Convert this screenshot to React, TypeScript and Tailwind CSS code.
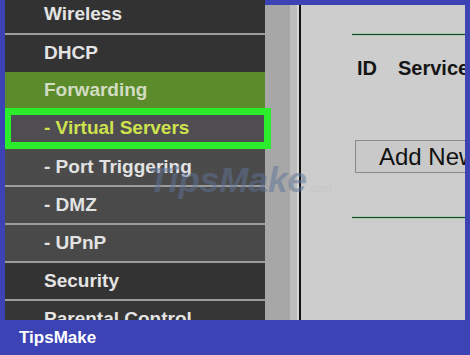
const font = { fontFamily: '"Liberation Sans", Arial, sans-serif' };

type Row = { label: string; bg: string; h: string; sep: boolean; text: string };

const ROWS: Row[] = [
  { label: "Wireless", bg: "bg-[#333232]", h: "h-[37px] -mt-[9px]", sep: true, text: "text-[#e4e4e4]" },
  { label: "DHCP", bg: "bg-[#333333]", h: "h-[37px]", sep: false, text: "text-[#e4e4e4]" },
  { label: "Forwarding", bg: "bg-[#5b8b2b]", h: "h-[36px]", sep: false, text: "text-[#d2dcc2]" },
];

const SUB_ROWS: Row[] = [
  { label: "- Port Triggering", bg: "bg-[#4b4b4b]", h: "h-[36px]", sep: true, text: "text-[#e2e2e2]" },
  { label: "- DMZ", bg: "bg-[#4a4a4a]", h: "h-[36px]", sep: true, text: "text-[#e2e2e2]" },
  { label: "- UPnP", bg: "bg-[#494949]", h: "h-[36px]", sep: true, text: "text-[#e2e2e2]" },
  { label: "Security", bg: "bg-[#333333]", h: "h-[36px]", sep: true, text: "text-[#e4e4e4]" },
  { label: "Parental Control", bg: "bg-[#363636]", h: "h-[36px]", sep: false, text: "text-[#e4e4e4]" },
];

function MenuRow({ row }: { row: Row }) {
  return (
    <>
      <div
        className={`${row.bg} ${row.h} ${row.text} flex shrink-0 items-center pl-[39px] text-[19px] font-bold`}
      >
        {row.label}
      </div>
      {row.sep && <div className="h-[2px] shrink-0 bg-[#9c9c9c]" />}
    </>
  );
}

export default function App() {
  return (
    <div className="relative flex h-[355px] w-[470px] flex-col bg-[#3b43b5]" style={font}>
      <div className="flex h-[320px] overflow-hidden pl-[5px] pr-[5px] pt-[5px]">
        {/* sidebar */}
        <div className="flex w-[260px] shrink-0 flex-col">
          {ROWS.map((r) => (
            <MenuRow key={r.label} row={r} />
          ))}
          {/* highlighted item, green frame drawn by padding */}
          <div className="relative z-10 flex h-[41px] w-[266px] shrink-0 bg-[#2ced2c] py-[7px] pl-[6px] pr-[7px]">
            <div className="flex flex-1 items-center bg-[#4f4d52] pl-[33px] text-[19px] font-bold text-[#cde24c]">
              - Virtual Servers
            </div>
          </div>
          {SUB_ROWS.map((r) => (
            <MenuRow key={r.label} row={r} />
          ))}
        </div>

        {/* scrollbar */}
        <div className="w-[25px] shrink-0 bg-[#a7a7a7]" />
        <div className="w-[7px] shrink-0 bg-[#bdbdbd]" />
        <div className="w-[2px] shrink-0 bg-[#d6d6d6]" />
        <div className="w-[2px] shrink-0 bg-[#111111]" />

        {/* content */}
        <div className="flex min-w-0 flex-1 flex-col overflow-hidden bg-[#cdcdcd] pl-[51px] pt-[28px]">
          <div className="h-[3px] w-[200px] shrink-0 border-y border-[#a9c9b0] bg-[#1d4630]" />
          <div className="mt-[19px] flex h-[26px] items-center gap-[21px] whitespace-nowrap pl-[5px] text-[20px] font-bold text-[#151515]">
            <span>ID</span>
            <span>Service</span>
          </div>
          <div className="ml-[3px] mt-[59px] flex h-[33px] w-[200px] shrink-0 items-center border border-[#8a8a8a] bg-[#c9c9c9] pl-[23px] text-[24px] whitespace-nowrap text-[#111111]">
            Add New
          </div>
          <div className="mt-[43px] h-[3px] w-[200px] shrink-0 border-y border-[#a9c9b0] bg-[#1d4630]" />
        </div>
      </div>

      {/* footer */}
      <div className="flex h-[35px] items-center pl-[19px] text-[17px] font-bold text-white">
        TipsMake
      </div>

      {/* watermark */}
      <div className="pointer-events-none absolute left-[148px] top-[154px] flex items-baseline text-[35px] font-bold italic text-[#5f7398] opacity-50">
        TipsMake
        <span className="ml-[1px] text-[11px] font-normal not-italic text-[#c0c0c0]">.com</span>
      </div>
    </div>
  );
}
